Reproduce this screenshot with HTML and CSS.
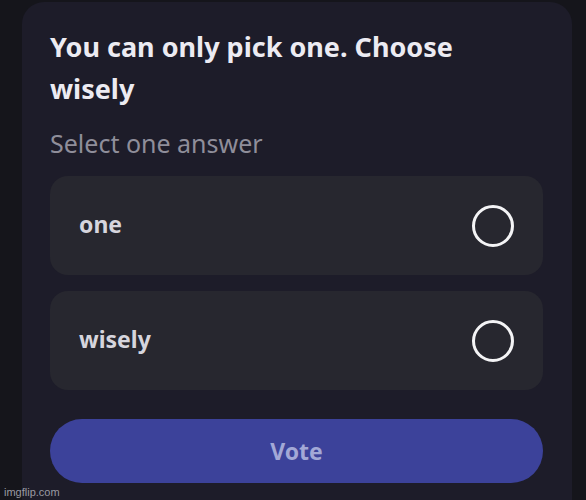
FILE: index.html
```html
<html>
<head>
<link rel="stylesheet" href="styles.css">
</head>
<body>
	<div class="poll-card">
		<h2 class="poll-question">You can only pick one. Choose wisely</h2>
		<p class="poll-hint">Select one answer</p>
		<div class="poll-answers">
			<div class="answer">
				<span class="answer-label">one</span>
				<span class="radio"></span>
			</div>
			<div class="answer">
				<span class="answer-label">wisely</span>
				<span class="radio"></span>
			</div>
		</div>
		<div class="vote-button">Vote</div>
	</div>
	<div class="watermark">imgflip.com</div>
</body>
</html>
```

FILE: styles.css
```css
html, body {
	margin: 0;
	height: 100%;
	overflow: hidden;
}
body {
	background: #15151b;
	font-family: 'Noto Sans', 'Open Sans', sans-serif;
	position: relative;
}
.poll-card {
	margin: 2px 14px 0 22px;
	height: 560px;
	background: #1d1c29;
	border-radius: 22px;
	padding: 24px 29px 0 28px;
	box-sizing: border-box;
}
.poll-question {
	margin: 0;
	width: 450px;
	font-size: 27px;
	line-height: 42px;
	font-weight: 700;
	color: #ecebf2;
}
.poll-hint {
	margin: 18px 0 0 0;
	font-size: 25px;
	line-height: 30px;
	color: #8f8e9a;
}
.poll-answers {
	margin-top: 18px;
	display: flex;
	flex-direction: column;
	gap: 16px;
}
.answer {
	height: 99px;
	background: #27272f;
	border-radius: 18px;
	display: flex;
	align-items: center;
	justify-content: space-between;
	padding: 0 29px 0 29px;
}
.answer-label {
	font-size: 23px;
	font-weight: 700;
	color: #d6d5dd;
	margin-top: -3px;
}
.radio {
	width: 42px;
	height: 42px;
	border: 3px solid #f4f4f6;
	border-radius: 50%;
	box-sizing: border-box;
}
.vote-button {
	margin-top: 29px;
	height: 64px;
	border-radius: 32px;
	background: #3c429a;
	display: flex;
	align-items: center;
	justify-content: center;
	font-size: 23px;
	font-weight: 700;
	color: #a3a8d6;
}
.watermark {
	position: absolute;
	left: 4px;
	bottom: 0;
	font-family: 'Liberation Sans', sans-serif;
	font-size: 11px;
	line-height: 15px;
	color: #9a9aa2;
}
```
